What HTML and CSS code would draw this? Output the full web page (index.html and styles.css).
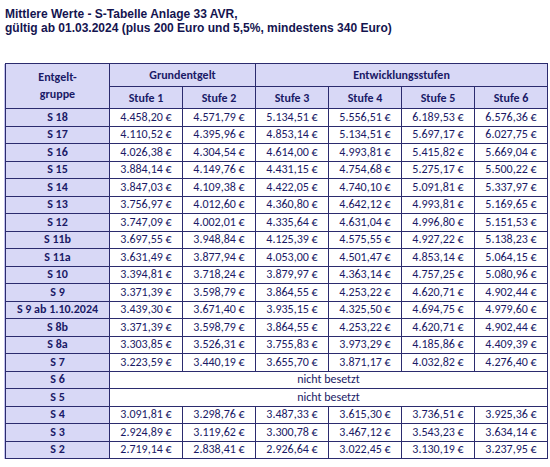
FILE: index.html
```html
<!DOCTYPE html>
<html lang="de">
<head>
<meta charset="utf-8">
<title>S-Tabelle Anlage 33 AVR</title>
<link rel="stylesheet" href="styles.css">
</head>
<body>
<div class="page">
  <h1 class="title">Mittlere Werte - S-Tabelle Anlage 33 AVR,<br>gültig ab 01.03.2024 (plus 200 Euro und 5,5%, mindestens 340 Euro)</h1>
  <table class="pay">
    <colgroup>
      <col class="c-group"><col class="c-val"><col class="c-val"><col class="c-val"><col class="c-val"><col class="c-val"><col class="c-val">
    </colgroup>
    <thead>
      <tr class="h1">
        <th rowspan="2" class="gcol">Entgelt-<br>gruppe</th>
        <th colspan="2">Grundentgelt</th>
        <th colspan="4">Entwicklungsstufen</th>
      </tr>
      <tr class="h2">
        <th>Stufe 1</th><th>Stufe 2</th><th>Stufe 3</th><th>Stufe 4</th><th>Stufe 5</th><th>Stufe 6</th>
      </tr>
    </thead>
    <tbody>
      <tr><th>S 18</th><td>4.458,20 €</td><td>4.571,79 €</td><td>5.134,51 €</td><td>5.556,51 €</td><td>6.189,53 €</td><td>6.576,36 €</td></tr>
      <tr><th>S 17</th><td>4.110,52 €</td><td>4.395,96 €</td><td>4.853,14 €</td><td>5.134,51 €</td><td>5.697,17 €</td><td>6.027,75 €</td></tr>
      <tr><th>S 16</th><td>4.026,38 €</td><td>4.304,54 €</td><td>4.614,00 €</td><td>4.993,81 €</td><td>5.415,82 €</td><td>5.669,04 €</td></tr>
      <tr><th>S 15</th><td>3.884,14 €</td><td>4.149,76 €</td><td>4.431,15 €</td><td>4.754,68 €</td><td>5.275,17 €</td><td>5.500,22 €</td></tr>
      <tr><th>S 14</th><td>3.847,03 €</td><td>4.109,38 €</td><td>4.422,05 €</td><td>4.740,10 €</td><td>5.091,81 €</td><td>5.337,97 €</td></tr>
      <tr><th>S 13</th><td>3.756,97 €</td><td>4.012,60 €</td><td>4.360,80 €</td><td>4.642,12 €</td><td>4.993,81 €</td><td>5.169,65 €</td></tr>
      <tr><th>S 12</th><td>3.747,09 €</td><td>4.002,01 €</td><td>4.335,64 €</td><td>4.631,04 €</td><td>4.996,80 €</td><td>5.151,53 €</td></tr>
      <tr><th>S 11b</th><td>3.697,55 €</td><td>3.948,84 €</td><td>4.125,39 €</td><td>4.575,55 €</td><td>4.927,22 €</td><td>5.138,23 €</td></tr>
      <tr><th>S 11a</th><td>3.631,49 €</td><td>3.877,94 €</td><td>4.053,00 €</td><td>4.501,47 €</td><td>4.853,14 €</td><td>5.064,15 €</td></tr>
      <tr><th>S 10</th><td>3.394,81 €</td><td>3.718,24 €</td><td>3.879,97 €</td><td>4.363,14 €</td><td>4.757,25 €</td><td>5.080,96 €</td></tr>
      <tr><th>S 9</th><td>3.371,39 €</td><td>3.598,79 €</td><td>3.864,55 €</td><td>4.253,22 €</td><td>4.620,71 €</td><td>4.902,44 €</td></tr>
      <tr><th>S 9 ab 1.10.2024</th><td>3.439,30 €</td><td>3.671,40 €</td><td>3.935,15 €</td><td>4.325,50 €</td><td>4.694,75 €</td><td>4.979,60 €</td></tr>
      <tr><th>S 8b</th><td>3.371,39 €</td><td>3.598,79 €</td><td>3.864,55 €</td><td>4.253,22 €</td><td>4.620,71 €</td><td>4.902,44 €</td></tr>
      <tr><th>S 8a</th><td>3.303,85 €</td><td>3.526,31 €</td><td>3.755,83 €</td><td>3.973,29 €</td><td>4.185,86 €</td><td>4.409,39 €</td></tr>
      <tr><th>S 7</th><td>3.223,59 €</td><td>3.440,19 €</td><td>3.655,70 €</td><td>3.871,17 €</td><td>4.032,82 €</td><td>4.276,40 €</td></tr>
      <tr><th>S 6</th><td colspan="6">nicht besetzt</td></tr>
      <tr><th>S 5</th><td colspan="6">nicht besetzt</td></tr>
      <tr><th>S 4</th><td>3.091,81 €</td><td>3.298,76 €</td><td>3.487,33 €</td><td>3.615,30 €</td><td>3.736,51 €</td><td>3.925,36 €</td></tr>
      <tr><th>S 3</th><td>2.924,89 €</td><td>3.119,62 €</td><td>3.300,78 €</td><td>3.467,12 €</td><td>3.543,23 €</td><td>3.634,14 €</td></tr>
      <tr><th>S 2</th><td>2.719,14 €</td><td>2.838,41 €</td><td>2.926,64 €</td><td>3.022,45 €</td><td>3.130,19 €</td><td>3.237,95 €</td></tr>
    </tbody>
  </table>
</div>
</body>
</html>
```
FILE: styles.css
```css
html, body {
  margin: 0;
  padding: 0;
  background: #ffffff;
}

.page {
  padding: 7px 0 0 5px;
}

.title {
  margin: 0;
  font-family: "Liberation Sans", Arial, sans-serif;
  font-weight: bold;
  font-size: 12px;
  line-height: 14px;
  color: #14144f;
}

.pay {
  margin-top: 28px;
  border-collapse: collapse;
  table-layout: fixed;
  width: 542px;
  font-family: Carlito, Calibri, Lato, sans-serif;
  font-size: 12px;
  color: #1a1a66;
  box-shadow: -1px 1px 0 #c4c4ee;
}

.c-group { width: 104px; }
.c-val { width: 73px; }

.pay th,
.pay td {
  border: 1px solid #2b2b6e;
  padding: 0;
  text-align: center;
  vertical-align: middle;
  white-space: nowrap;
}

.pay th {
  background: #d8d8f6;
  font-weight: bold;
}

.pay td {
  background: #ffffff;
}

.h1 th { height: 22px; }
.h2 th { height: 21px; }
.gcol { line-height: 17px; }

.pay tbody tr { height: 17.5px; }
.pay tbody th,
.pay tbody td { line-height: 15px; }
```
